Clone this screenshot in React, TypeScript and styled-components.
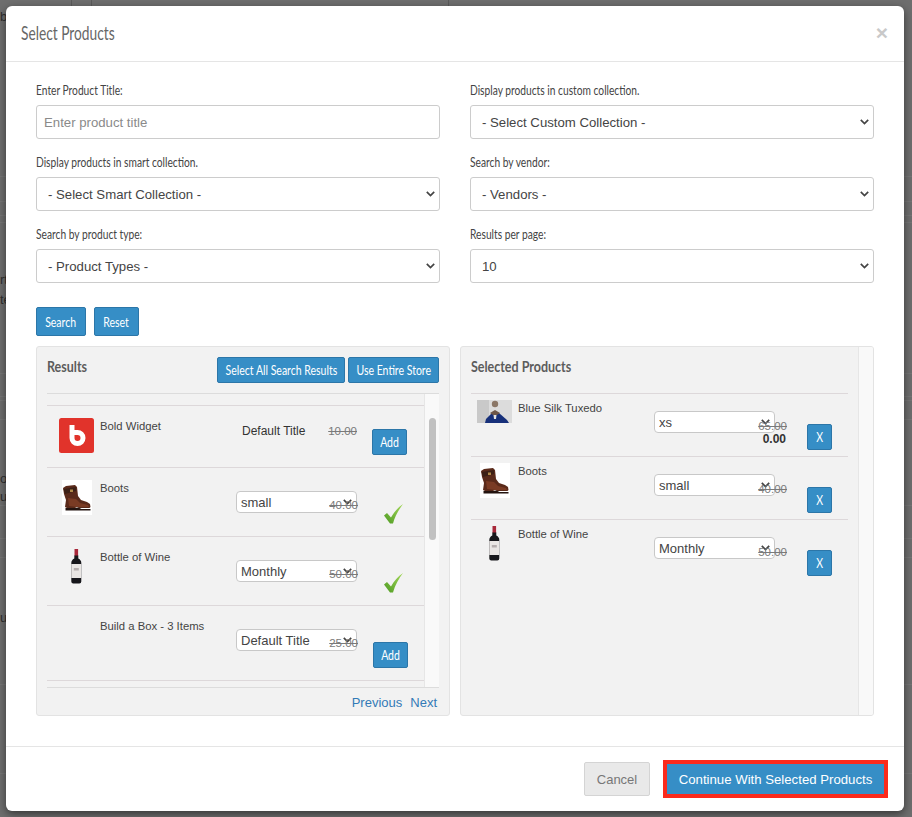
import React from "react";
import styled, { createGlobalStyle } from "styled-components";

const narrow = `Lato, "Liberation Sans", sans-serif`;
const helvetica = `"Liberation Sans", Arial, sans-serif`;
const chevron = `url("data:image/svg+xml,%3Csvg xmlns='http://www.w3.org/2000/svg' width='9' height='6' viewBox='0 0 9 6'%3E%3Cpath d='M.8.9l3.700 3.700L8.200.9' fill='none' stroke='%23444' stroke-width='1.700'/%3E%3C/svg%3E")`;

const GlobalStyle = createGlobalStyle`
  html, body {
    margin: 0;
    padding: 0;
    height: 100%;
    background: #6e6e6e;
    overflow: hidden;
  }
  * {
    box-sizing: border-box;
  }
`;

const Backdrop = styled.div`
  position: relative;
  width: 912px;
  height: 817px;
  padding: 6px 8px 6px 6px;
  background: #6e6e6e;
  overflow: hidden;
`;

const BehindText = styled.span<{ $top: number }>`
  position: absolute;
  top: ${(p) => p.$top}px;
  left: 0;
  font: 13px/15px ${helvetica};
  color: #2e2e2e;
`;

const BehindRule = styled.div<{ $top: number }>`
  position: absolute;
  top: ${(p) => p.$top}px;
  left: 0;
  width: 100%;
  height: 1px;
  background: rgba(255, 255, 255, 0.06);
`;

const BehindTick = styled.div<{ $left: number }>`
  position: absolute;
  top: 0;
  left: ${(p) => p.$left}px;
  width: 1px;
  height: 6px;
  background: rgba(0, 0, 0, 0.18);
`;

const Modal = styled.div`
  position: relative;
  display: flex;
  flex-direction: column;
  height: 805px;
  background: #fff;
  border-radius: 6px;
  box-shadow: 0 3px 9px rgba(0, 0, 0, 0.5);
`;

const ModalHeader = styled.div`
  display: flex;
  align-items: center;
  justify-content: space-between;
  height: 56px;
  padding: 0 16px 3px 15px;
  border-bottom: 1px solid #e5e5e5;
`;

const ModalTitle = styled.h4`
  margin: 0;
  font: 400 19px ${narrow};
  color: #666;
  transform: scaleX(0.724);
  transform-origin: left center;
`;

const CloseButton = styled.button`
  padding: 0;
  border: 0;
  background: none;
  font: 700 21px/1 ${helvetica};
  color: #c9c9c9;
`;

const ModalBody = styled.div`
  flex: 1;
  padding: 20px 30px 0;
`;

const FormGrid = styled.div`
  display: grid;
  grid-template-columns: 404px 404px;
  column-gap: 30px;
  row-gap: 15px;
`;

const Field = styled.div`
  display: flex;
  flex-direction: column;
`;

const Label = styled.label`
  height: 18px;
  margin-bottom: 5px;
  font: 400 14px/15px ${narrow};
  color: #444;
  white-space: nowrap;
  transform: scaleX(0.73);
  transform-origin: left center;
`;

const TextInput = styled.input`
  height: 34px;
  padding: 0 7px;
  border: 1px solid #ccc;
  border-radius: 3px;
  font: 13.2px ${helvetica};
  color: #555;
  &::placeholder {
    color: #8a8a8a;
    opacity: 1;
  }
`;

const BigSelect = styled.select`
  height: 34px;
  padding: 0 20px 0 11px;
  border: 1px solid #ccc;
  border-radius: 3px;
  appearance: none;
  background: #fff ${chevron} no-repeat right 4px center;
  font: 13.2px ${helvetica};
  color: #444;
`;

const SearchBar = styled.div`
  display: flex;
  gap: 8px;
  margin-top: 24px;
`;

const Button = styled.button<{ $w: number; $h?: number }>`
  display: flex;
  flex: 0 0 auto;
  align-items: center;
  justify-content: center;
  width: ${(p) => p.$w}px;
  height: ${(p) => p.$h ?? 26}px;
  padding: 0 0 1px;
  border: 1px solid #2c76a8;
  border-radius: 2px;
  background: #368ec6;
  font: 400 14px ${narrow};
  color: #fff;
  white-space: nowrap;
`;

const ButtonText = styled.span`
  display: inline-block;
  flex: none;
  transform: scaleX(0.75);
`;

const Panels = styled.div`
  display: grid;
  grid-template-columns: 414px 414px;
  column-gap: 10px;
  height: 370px;
  margin-top: 10px;
`;

const Panel = styled.section`
  display: flex;
  border: 1px solid #e3e3e3;
  border-radius: 3px;
  background: #f2f2f2;
  overflow: hidden;
`;

const PanelMain = styled.div`
  flex: 1;
  display: flex;
  flex-direction: column;
  min-width: 0;
  padding: 0 10px;
`;

const PanelHeader = styled.div`
  display: flex;
  justify-content: space-between;
  height: 47px;
  padding-top: 10px;
  border-bottom: 1px solid #dcdcdc;
`;

const PanelTitle = styled.h5`
  margin: 0;
  font: 700 16px/17px ${narrow};
  color: #5c5c5c;
  white-space: nowrap;
  transform: scaleX(0.78);
  transform-origin: left center;
`;

const HeaderActions = styled.div`
  display: flex;
  gap: 3px;
`;

const ResultsArea = styled.div`
  display: flex;
  height: 294px;
  border-bottom: 1px solid #dcdcdc;
`;

const ResultsList = styled.div`
  flex: 1;
  min-width: 0;
  padding-top: 11px;
`;

const ScrollTrack = styled.div`
  width: 15px;
  padding: 24px 3px 0 4px;
  border-left: 1px solid #e6e6e6;
  background: #f9f9f9;
`;

const ScrollThumb = styled.div`
  height: 122px;
  border-radius: 4px;
  background: #c1c1c1;
`;

const Row = styled.div`
  display: flex;
  border-top: 1px solid #ddd8da;
`;

const LastRule = styled.div`
  border-top: 1px solid #ddd8da;
`;

const ThumbCell = styled.div<{ $wide?: boolean }>`
  flex: 0 0 ${(p) => (p.$wide ? 53 : 47)}px;
  display: flex;
  justify-content: center;
  padding: ${(p) => (p.$wide ? "12px 6px 0 12px" : "6px 0 0")};
`;

const ThumbSvg = styled.svg`
  display: block;
`;

const ProductName = styled.div<{ $top: number }>`
  flex: 0 0 136px;
  padding-top: ${(p) => p.$top}px;
  font: 11.3px/14px ${helvetica};
  color: #444;
`;

const VariantCell = styled.div<{ $top: number }>`
  position: relative;
  flex: 0 0 120px;
  padding-top: ${(p) => p.$top}px;
`;

const SmallSelect = styled.select`
  display: block;
  width: 121px;
  height: 22px;
  padding: 0 0 0 4px;
  border: 1px solid #c8c8c8;
  border-radius: 4px;
  appearance: none;
  background: #fff ${chevron} no-repeat right 4px center;
  font: 13px ${helvetica};
  color: #444;
`;

const PlainVariant = styled.div`
  padding-left: 6px;
  font: 12px/14px ${helvetica};
  color: #333;
`;

const OldPrice = styled.span<{ $right: number; $top: number }>`
  position: absolute;
  top: ${(p) => p.$top}px;
  right: ${(p) => p.$right}px;
  font: 11.5px/14px ${helvetica};
  color: #7a7a7a;
  text-decoration: line-through;
`;

const NewPrice = styled.span`
  position: absolute;
  top: 38px;
  right: -11px;
  font: 700 12px/14px ${helvetica};
  color: #333;
`;

const ActionCell = styled.div<{ $top: number; $left: number }>`
  padding: ${(p) => p.$top}px 0 12px ${(p) => p.$left}px;
`;

const Pager = styled.div`
  display: flex;
  justify-content: flex-end;
  gap: 8px;
  padding: 7px 2px 0 0;
  font: 13px/16px ${helvetica};
`;

const PagerLink = styled.a`
  color: #337ab7;
  text-decoration: none;
`;

const SelectedList = styled.div`
  margin-top: -1px;
`;

const SelectedRow = styled(Row)`
  height: 63px;
`;

const CheckSvg = styled.svg`
  display: block;
`;

const RightStrip = styled.div`
  flex: 0 0 15px;
  border-left: 1px solid #e6e6e6;
  background: #f9f9f9;
`;

const ModalFooter = styled.div`
  display: flex;
  justify-content: flex-end;
  align-items: center;
  gap: 13px;
  height: 65px;
  padding-right: 16px;
  border-top: 1px solid #e5e5e5;
`;

const CancelButton = styled.button`
  width: 66px;
  height: 34px;
  padding: 0;
  border: 1px solid #d4d4d4;
  border-radius: 2px;
  background: #e9e9e9;
  font: 13px ${helvetica};
  color: #777;
`;

const ContinueButton = styled.button`
  width: 225px;
  height: 38px;
  padding: 0;
  border: 4px solid #fb2a1c;
  background: #368ec6;
  font: 13.2px ${helvetica};
  color: #fff;
`;

const BoldLogo = () => (
  <ThumbSvg width="35" height="35" viewBox="0 0 35 35">
    <rect width="35" height="35" rx="2.5" fill="#e1332b" />
    <path d="M13 7v13a5.500 5.500 0 1 0 5.500-5.500h-5" fill="none" stroke="#fff" strokeWidth="5" />
  </ThumbSvg>
);

const BootImage = () => (
  <ThumbSvg width="30" height="35" viewBox="0 0 30 35">
    <rect width="30" height="35" fill="#fff" />
    <path d="M1 8l3-2 9-1 2 2 1 9 3 4 6 2 3 2 .5 3-1 1H17l-2-1-2 1H5l-2-1 1-7-2-6z" fill="#5a2a1a" />
    <path d="M1.500 9l12.500-2v4L3 14z" fill="#3c2016" />
    <path d="M6 18l8 1 4 4 8 2 1 2H15l-8-1z" fill="#7a3b24" />
    <path d="M3.500 28h10l3-.5 3 1.500h9v1.500H3.500z" fill="#241410" />
    <rect x="8" y="9.500" width="3" height="2.500" fill="#b08a4a" />
  </ThumbSvg>
);

const WineImage = () => (
  <ThumbSvg width="30" height="35" viewBox="0.7 0 30 35">
    <rect x="13.200" y="0" width="3.600" height="7" fill="#a8283a" />
    <path d="M13 6.500h4v3c2 1 3 2.500 3 4.500v18.500a2 2 0 0 1-2 2h-6a2 2 0 0 1-2-2V14c0-2 1-3.500 3-4.500z" fill="#17171b" />
    <rect x="10" y="15" width="10" height="14" fill="#e9e6e4" />
    <rect x="12.500" y="19" width="5" height="2.500" fill="#b5aeae" />
  </ThumbSvg>
);

const TuxedoImage = () => (
  <ThumbSvg width="35" height="23" viewBox="0 0 35 23">
    <rect width="35" height="23" fill="#dcdcdc" />
    <rect width="12" height="23" fill="#c9c9c9" />
    <circle cx="18" cy="4" r="3.200" fill="#8a7666" />
    <path d="M8 23l1-4 6-6 3-2 4 2 8 7 2 3z" fill="#17307a" />
    <path d="M16 11h4l-1 8h-2z" fill="#e4e4e4" />
    <path d="M13 13l5-3 5 3-3 2h-4z" fill="#6d5648" />
  </ThumbSvg>
);

const CheckIcon = () => (
  <CheckSvg width="20" height="20" viewBox="0 0 20 20">
    <defs>
      <linearGradient id="tick" x1="0" y1="1" x2="1" y2="0">
        <stop offset="0" stopColor="#4d9a22" />
        <stop offset="1" stopColor="#a5d95a" />
      </linearGradient>
    </defs>
    <path d="M0 11.500l3-2.500 4 4.500C10 8 14 3.500 19 0c-4 5.500-8 12-10 19.500h-3z" fill="url(#tick)" />
  </CheckSvg>
);

type Result = {
  name: string;
  thumb?: React.ReactNode;
  variant: string;
  price: string;
  plain?: boolean;
  added?: boolean;
};

const results: Result[] = [
  { name: "Bold Widget", thumb: <BoldLogo />, variant: "Default Title", price: "10.00", plain: true },
  { name: "Boots", thumb: <BootImage />, variant: "small", price: "40.00", added: true },
  { name: "Bottle of Wine", thumb: <WineImage />, variant: "Monthly", price: "50.00", added: true },
  { name: "Build a Box - 3 Items", variant: "Default Title", price: "25.00" },
];

const selected = [
  { name: "Blue Silk Tuxedo", thumb: <TuxedoImage />, variant: "xs", price: "65.00", total: "0.00" },
  { name: "Boots", thumb: <BootImage />, variant: "small", price: "40.00" },
  { name: "Bottle of Wine", thumb: <WineImage />, variant: "Monthly", price: "50.00" },
];

const fields = [
  { label: "Display products in custom collection.", value: "- Select Custom Collection -" },
  { label: "Display products in smart collection.", value: "- Select Smart Collection -" },
  { label: "Search by vendor:", value: "- Vendors -" },
  { label: "Search by product type:", value: "- Product Types -" },
  { label: "Results per page:", value: "10" },
];

const App: React.FC = () => {
  return (
    <Backdrop>
      <GlobalStyle />
      <BehindTick $left={71} />
      <BehindTick $left={91} />
      <BehindTick $left={448} />
      {[176, 201, 215, 222, 373, 396, 400, 419, 505, 538, 557, 684, 773].map((y) => (
        <BehindRule key={y} $top={y} />
      ))}
      <BehindText $top={9}>b</BehindText>
      <BehindText $top={272}>rt</BehindText>
      <BehindText $top={292}>te</BehindText>
      <BehindText $top={471}>o</BehindText>
      <BehindText $top={489}>u</BehindText>
      <BehindText $top={610}>u</BehindText>
      <Modal>
        <ModalHeader>
          <ModalTitle>Select Products</ModalTitle>
          <CloseButton>×</CloseButton>
        </ModalHeader>
        <ModalBody>
          <FormGrid>
            <Field>
              <Label>Enter Product Title:</Label>
              <TextInput placeholder="Enter product title" />
            </Field>
            {fields.map((f) => (
              <Field key={f.label}>
                <Label>{f.label}</Label>
                <BigSelect defaultValue={f.value}>
                  <option>{f.value}</option>
                </BigSelect>
              </Field>
            ))}
          </FormGrid>
          <SearchBar>
            <Button $w={50} $h={29}>
              <ButtonText>Search</ButtonText>
            </Button>
            <Button $w={45} $h={29}>
              <ButtonText>Reset</ButtonText>
            </Button>
          </SearchBar>
          <Panels>
            <Panel>
              <PanelMain>
                <PanelHeader>
                  <PanelTitle>Results</PanelTitle>
                  <HeaderActions>
                    <Button $w={128}>
                      <ButtonText>Select All Search Results</ButtonText>
                    </Button>
                    <Button $w={91}>
                      <ButtonText>Use Entire Store</ButtonText>
                    </Button>
                  </HeaderActions>
                </PanelHeader>
                <ResultsArea>
                  <ResultsList>
                    {results.map((r) => (
                      <Row key={r.name}>
                        <ThumbCell $wide>{r.thumb}</ThumbCell>
                        <ProductName $top={13}>{r.name}</ProductName>
                        <VariantCell $top={r.plain ? 18 : 23}>
                          {r.plain ? (
                            <PlainVariant>{r.variant}</PlainVariant>
                          ) : (
                            <SmallSelect defaultValue={r.variant}>
                              <option>{r.variant}</option>
                            </SmallSelect>
                          )}
                          <OldPrice $right={-1} $top={r.plain ? 18 : 30}>
                            {r.price}
                          </OldPrice>
                        </VariantCell>
                        <ActionCell $top={r.plain ? 23 : 36} $left={r.added ? 27 : 16}>
                          {r.added ? (
                            <CheckIcon />
                          ) : (
                            <Button $w={35}>
                              <ButtonText>Add</ButtonText>
                            </Button>
                          )}
                        </ActionCell>
                      </Row>
                    ))}
                    <LastRule />
                  </ResultsList>
                  <ScrollTrack>
                    <ScrollThumb />
                  </ScrollTrack>
                </ResultsArea>
                <Pager>
                  <PagerLink>Previous</PagerLink>
                  <PagerLink>Next</PagerLink>
                </Pager>
              </PanelMain>
            </Panel>
            <Panel>
              <PanelMain>
                <PanelHeader>
                  <PanelTitle>Selected Products</PanelTitle>
                </PanelHeader>
                <SelectedList>
                  {selected.map((s) => (
                    <SelectedRow key={s.name}>
                      <ThumbCell>{s.thumb}</ThumbCell>
                      <ProductName $top={7}>{s.name}</ProductName>
                      <VariantCell $top={17}>
                        <SmallSelect defaultValue={s.variant}>
                          <option>{s.variant}</option>
                        </SmallSelect>
                        <OldPrice $right={-12} $top={25}>
                          {s.price}
                        </OldPrice>
                        {s.total && <NewPrice>{s.total}</NewPrice>}
                      </VariantCell>
                      <ActionCell $top={30} $left={32}>
                        <Button $w={25}>
                          <ButtonText>X</ButtonText>
                        </Button>
                      </ActionCell>
                    </SelectedRow>
                  ))}
                </SelectedList>
              </PanelMain>
              <RightStrip />
            </Panel>
          </Panels>
        </ModalBody>
        <ModalFooter>
          <CancelButton>Cancel</CancelButton>
          <ContinueButton>Continue With Selected Products</ContinueButton>
        </ModalFooter>
      </Modal>
    </Backdrop>
  );
};

export default App;
